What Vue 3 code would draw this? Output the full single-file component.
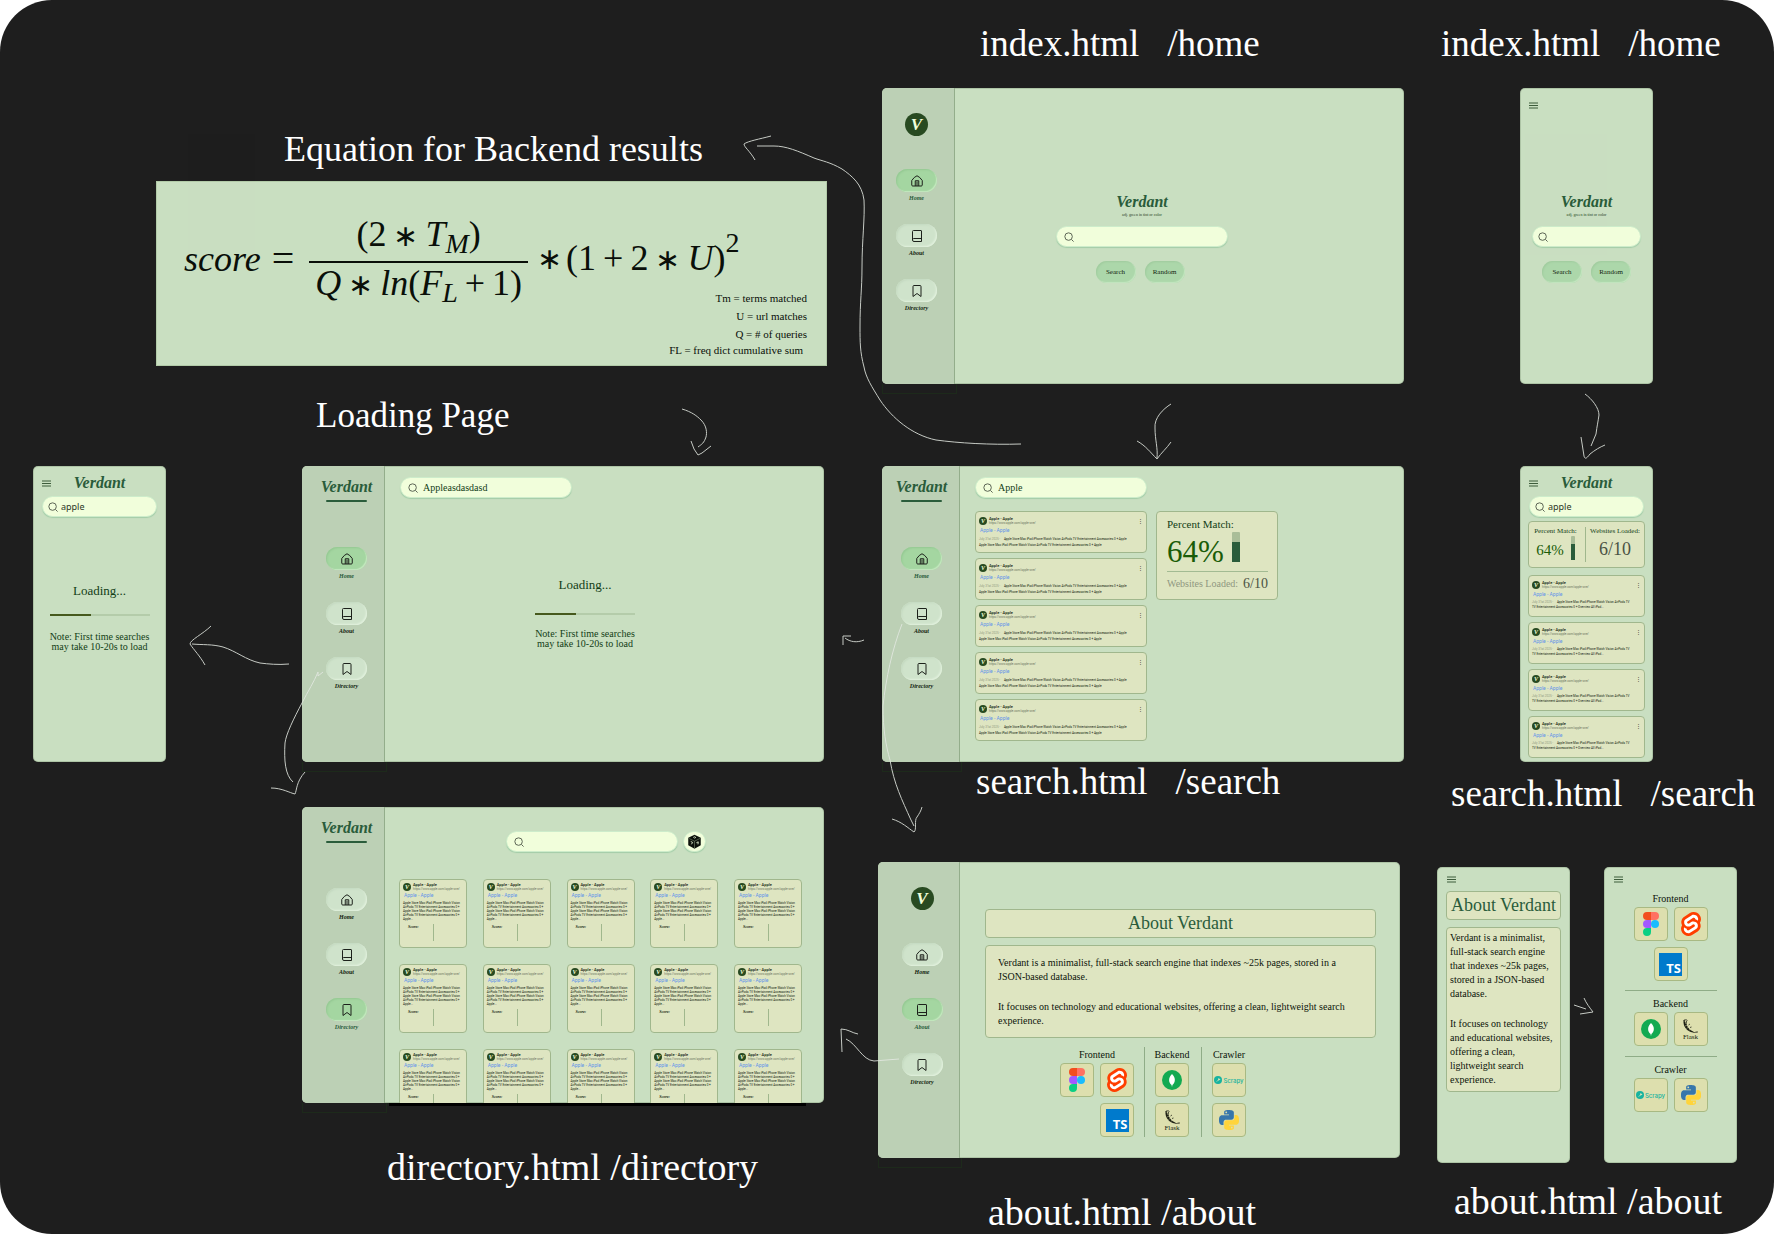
<script setup>
import { ref } from 'vue'

const navItems = [
  { id: 'home', label: 'Home', icon: '#i-home' },
  { id: 'about', label: 'About', icon: '#i-book' },
  { id: 'directory', label: 'Directory', icon: '#i-bookmark' },
]

const desktops = [
  { id: 'home', active: 'home', badge: true },
  { id: 'loading', active: 'home', badge: false },
  { id: 'search', active: 'home', badge: false },
  { id: 'directory', active: 'directory', badge: false },
  { id: 'about', active: 'about', badge: true },
]

const mobiles = ['m-home', 'm-loading', 'm-search', 'm-about', 'm-stack']

const titles = [
  { id: 't-home', parts: ['index.html', '/home'] },
  { id: 't-mhome', parts: ['index.html', '/home'] },
  { id: 't-equation', parts: ['Equation for Backend results'] },
  { id: 't-loading', parts: ['Loading Page'] },
  { id: 't-search', parts: ['search.html', '/search'] },
  { id: 't-msearch', parts: ['search.html', '/search'] },
  { id: 't-directory', parts: ['directory.html /directory'] },
  { id: 't-about', parts: ['about.html /about'] },
  { id: 't-mabout', parts: ['about.html /about'] },
]

const legend = ['Tm = terms matched', 'U = url matches', 'Q = # of queries']

const arrows = [
  'M1021 444C990 445 958 443 936 440C912 435 892 418 880 400C872 387 866 378 864 367C860 352 860 342 860 327C860 300 862 290 862 267C862 240 865 218 864 200C862 184 852 176 842 169C830 162 822 161 814 158C798 151 786 146 774 146L757 146M771 136C760 139 748 141 744 144C744 147 750 151 755 160',
  'M682 409C692 412 697 416 701 420C707 426 707 433 706 437C704 443 702 444 698 447M691 441L694 449L698 455L702 453L711 446',
  'M1171 404C1163 409 1154 418 1155 428C1155 440 1158 448 1157 458M1137 441C1146 446 1150 452 1157 459C1161 453 1167 448 1171 442',
  'M1585 394C1592 399 1599 408 1599 415C1598 422 1597 426 1596 434L1591 446M1581 437L1584 456C1585 460 1587 458 1590 454C1595 450 1600 447 1605 445',
  'M289 664C278 665 268 664 260 663C246 660 236 651 223 647C212 644 203 645 192 644M211 626C203 634 190 640 190 644C194 650 200 656 205 665',
  'M323 672L318 676L318 672C314 682 308 691 302 703C294 718 286 734 285 743C284 760 285 775 293 782M271 788C282 788 290 793 295 794C297 790 296 782 305 772',
  'M864 640C857 643 850 642 845 638M851 636L843 636L843 645',
  'M902 624C892 650 886 678 883 706C883 730 886 746 890 760C894 784 902 800 911 820L914 826M892 819C902 822 908 828 914 832C917 830 914 820 917 817C919 814 921 811 922 807',
  'M899 1059L874 1061C862 1060 857 1044 846 1039M858 1034C852 1033 848 1029 841 1029L842 1052',
  'M1574 1005L1586 1009M1584 998C1586 1003 1590 1008 1593 1012L1580 1014',
]

const blurb = [
  'Verdant is a minimalist, full-stack search engine that indexes ~25k pages, stored in a JSON-based database.',
  'It focuses on technology and educational websites, offering a clean, lightweight search experience.',
]

const stack = [
  { name: 'Frontend', tools: ['figma', 'svelte', 'ts'] },
  { name: 'Backend', tools: ['mongo', 'flask'] },
  { name: 'Crawler', tools: ['scrapy', 'python'] },
]

const snippet = 'Apple Store Mac iPad iPhone Watch Vision AirPods TV Entertainment Accessories 0 + Apple'
const snippetShort = 'Apple Store Mac iPad iPhone Watch Vision AirPods TV'
const snippetTail = 'TV Entertainment Accessories 0 + Overview All iPad...'
const siteUrl = 'https://www.apple.com/apple-one/'

const queries = ref({
  home: '', loading: 'Appleasdasdasd', search: 'Apple', directory: '',
  'm-home': '', 'm-loading': 'apple', 'm-search': 'apple',
})
</script>

<template>
  <div class="board">
    <svg class="sprite" aria-hidden="true">
      <symbol id="i-home" viewBox="0 0 24 24"><path d="M1.500 11 6.500 5 12 1.500 17.500 5l5 6V20a2 2 0 0 1-2 2h-17a2 2 0 0 1-2-2zM8.500 22V11.500h7V22M12 13v9" fill="none" stroke="currentColor" stroke-width="2" /></symbol>
      <symbol id="i-book" viewBox="0 0 24 24"><path d="M3 20V3a2 2 0 0 1 2-2h15a1 1 0 0 1 1 1v21H6a3 3 0 0 1-3-3c0-2 1-3 3-3h15" fill="none" stroke="currentColor" stroke-width="2" stroke-linejoin="round" /></symbol>
      <symbol id="i-bookmark" viewBox="0 0 24 24"><path d="M4 23V3a2 2 0 0 1 2-2h12a2 2 0 0 1 2 2v20l-8-6z" fill="none" stroke="currentColor" stroke-width="2" stroke-linejoin="round" /></symbol>
      <symbol id="i-search" viewBox="0 0 24 24"><circle cx="11" cy="11" r="9" fill="none" stroke="currentColor" stroke-width="2.400" /><path d="m18 18 5 5" stroke="currentColor" stroke-width="2.400" /></symbol>
      <symbol id="i-menu" viewBox="0 0 9 7"><path d="M0 1h9M0 3.500h9M0 6h9" stroke="currentColor" stroke-width="1" /></symbol>
      <symbol id="i-dice" viewBox="0 0 24 24">
        <path d="M12 1 22 6v12l-10 5.500L2 18V6z" fill="#0b110b" />
        <path d="m3 7 9 4.500L21 7M12 11.500V23" fill="none" stroke="#8fa085" stroke-width=".8" />
        <path d="M10 5.500q2-2 4 0l-2 1.500M6 12l3 1.500-2 3M15 14l3-1.500-.5 4" fill="none" stroke="#dbe8c9" stroke-width="1.500" />
      </symbol>
      <symbol id="l-figma" viewBox="0 0 38 57">
        <path d="M19 28.500a9.500 9.500 0 1 1 19 0 9.500 9.500 0 0 1-19 0z" fill="#1abcfe" />
        <path d="M0 47.500A9.500 9.500 0 0 1 9.500 38H19v9.500a9.500 9.500 0 1 1-19 0z" fill="#0acf83" />
        <path d="M19 0v19h9.500a9.500 9.500 0 1 0 0-19z" fill="#ff7262" />
        <path d="M0 9.500A9.500 9.500 0 0 0 9.500 19H19V0H9.500A9.500 9.500 0 0 0 0 9.500z" fill="#f24e1e" />
        <path d="M0 28.500A9.500 9.500 0 0 0 9.500 38H19V19H9.500A9.500 9.500 0 0 0 0 28.500z" fill="#a259ff" />
      </symbol>
      <symbol id="l-svelte" viewBox="0 0 98 118">
        <path fill="#ff3e00" d="M91.8 15.6C80.9-.1 59.2-4.7 43.6 5.2L16.1 22.8C8.6 27.5 3.4 35.2 1.9 43.9c-1.3 7.3-.2 14.8 3.3 21.3-2.4 3.6-4 7.6-4.7 11.8-1.6 8.9.5 18.1 5.7 25.4 11 15.7 32.6 20.3 48.2 10.4l27.5-17.5c7.5-4.7 12.7-12.4 14.2-21.1 1.3-7.3.2-14.8-3.3-21.3 2.4-3.6 4-7.6 4.7-11.8 1.7-9-.4-18.2-5.7-25.5" />
        <path fill="#fff" d="M40.9 103.900c-8.900 2.300-18.200-1.200-23.400-8.700-3.200-4.400-4.400-9.900-3.500-15.300.2-.9.4-1.700.6-2.600l.5-1.600 1.400 1c3.300 2.400 6.900 4.200 10.800 5.400l1 .3-.1 1c-.1 1.400.3 2.900 1.100 4.100 1.600 2.300 4.400 3.400 7.100 2.700.6-.2 1.200-.4 1.700-.7L65.500 72c1.400-.9 2.300-2.200 2.600-3.800.3-1.600-.1-3.300-1-4.600-1.600-2.300-4.400-3.300-7.100-2.600-.6.2-1.200.4-1.700.7l-10.500 6.700c-1.700 1.100-3.600 1.900-5.600 2.400-8.900 2.300-18.200-1.200-23.400-8.700-3.100-4.400-4.400-9.900-3.400-15.300.9-5.200 4.100-9.900 8.600-12.700l27.500-17.500c1.700-1.100 3.600-1.900 5.600-2.500 8.900-2.300 18.200 1.200 23.400 8.700 3.200 4.400 4.400 9.900 3.500 15.300-.2.9-.4 1.700-.7 2.600l-.5 1.600-1.400-1c-3.300-2.400-6.900-4.200-10.800-5.400l-1-.3.1-1c.1-1.400-.3-2.900-1.100-4.100-1.600-2.300-4.400-3.300-7.100-2.600-.6.2-1.200.4-1.700.7L32.400 46.100c-1.400.9-2.300 2.200-2.600 3.800s.1 3.300 1 4.600c1.600 2.300 4.400 3.300 7.100 2.600.6-.2 1.200-.4 1.700-.7l10.500-6.700c1.700-1.100 3.600-1.900 5.600-2.500 8.900-2.300 18.200 1.200 23.400 8.700 3.200 4.400 4.400 9.900 3.500 15.300-.9 5.200-4.100 9.900-8.600 12.700l-27.500 17.500c-1.700 1.100-3.600 1.900-5.600 2.500" />
      </symbol>
      <symbol id="l-mongo" viewBox="0 0 20 20"><circle cx="10" cy="10" r="10" fill="#13aa52" /><path d="M10 4c4 4 3.500 8.500.4 11l-.2 1.500h-.4L9.600 15C6.500 12.500 6 8 10 4z" fill="#fff" /></symbol>
      <symbol id="l-flask" viewBox="0 0 32 30"><path d="M2 3c-1 12 6 25 29 25-12-2-19-8-22-15C8 9 8 6 9 3 7 4 6 6 6 8 4 6 4 4 6 2z" fill="#1c1f14" /><path d="M5 8l3 1M5 14l5-2M8 19l4-3M13 23l3-4" fill="none" stroke="#dddfae" stroke-width="1" /><path d="M2 3c3-2 6-2 8 0M12 12l3-2M15 17l3-1M26 26h5" fill="none" stroke="#1c1f14" stroke-width="1.500" /></symbol>
      <symbol id="l-scrapy" viewBox="0 0 16 16"><circle cx="8" cy="8" r="8" fill="#17b3a0" /><path d="m3 13 5-5 1-4 4 3-4 2z" fill="#dfe6b4" /></symbol>
      <symbol id="l-python" viewBox="0 0 24 24">
        <path fill="#3776ab" d="M14.250.18l.9.2.73.26.59.3.45.32.34.34.25.34.16.33.1.3.04.26.02.2-.01.13V8.500l-.05.63-.13.55-.21.46-.26.38-.3.31-.33.25-.35.19-.35.14-.33.1-.3.07-.26.04-.21.02H8.770l-.69.05-.59.14-.5.22-.41.27-.33.32-.27.35-.2.36-.15.37-.1.35-.07.32-.04.27-.02.21v3.060H3.170l-.21-.03-.28-.07-.32-.12-.35-.18-.36-.26-.36-.36-.35-.46-.32-.59-.28-.73-.21-.88-.14-1.050-.05-1.230.06-1.220.16-1.040.24-.87.32-.71.36-.57.4-.44.42-.33.42-.24.4-.16.36-.1.32-.05.24-.01h.16l.06.01h8.160v-.83H6.180l-.01-2.750-.02-.37.05-.34.11-.31.17-.28.25-.26.31-.23.38-.2.44-.18.51-.15.58-.12.64-.1.71-.06.77-.04.84-.02 1.270.05zm-6.300 1.980l-.23.33-.08.41.08.41.23.34.33.22.41.09.41-.09.33-.22.23-.34.08-.41-.08-.41-.23-.33-.33-.22-.41-.09-.41.09z" />
        <path fill="#ffd43b" d="M21.100 6.110l.28.06.32.12.35.18.36.27.36.35.35.47.32.59.28.73.21.88.14 1.040.05 1.230-.06 1.230-.16 1.040-.24.86-.32.71-.36.57-.4.45-.42.33-.42.24-.4.16-.36.09-.32.05-.24.02-.16-.01h-8.220v.82h5.840l.01 2.760.02.36-.05.34-.11.31-.17.29-.25.25-.31.24-.38.2-.44.17-.51.15-.58.13-.64.09-.71.07-.77.04-.84.01-1.270-.04-1.070-.14-.9-.2-.73-.25-.59-.3-.45-.33-.34-.34-.25-.34-.16-.33-.1-.3-.04-.25-.02-.2.01-.13v-5.340l.05-.64.13-.54.21-.46.26-.38.3-.32.33-.24.35-.2.35-.14.33-.1.3-.06.26-.04.21-.02.13-.01h5.840l.69-.05.59-.14.5-.21.41-.28.33-.32.27-.35.2-.36.15-.36.1-.35.07-.32.04-.28.02-.21V6.070h2.090l.14.01zm-6.470 14.250l-.23.33-.08.41.08.41.23.33.33.23.41.08.41-.08.33-.23.23-.33.08-.41-.08-.41-.23-.33-.33-.23-.41-.08-.41.08z" />
      </symbol>
    </svg>

    <h2 v-for="t in titles" :key="t.id" class="title" :class="t.id">
      <span v-for="p in t.parts" :key="p">{{ p }}</span>
    </h2>

    <!-- Scoring formula -->
    <section class="node equation">
      <div class="formula">
        <i>score</i><span class="op equals">=</span>
        <span class="fraction">
          <span class="term numerator">(2<span class="op ast">∗</span><i>T</i><sub><i>M</i></sub>)</span>
          <span class="term denominator"><i>Q</i><span class="op ast">∗</span><i>ln</i>(<i>F</i><sub><i>L</i></sub><span class="op">+</span>1)</span>
        </span>
        <span class="op ast outer">∗</span>
        <span class="term">(1<span class="op">+</span>2<span class="op ast">∗</span><i>U</i>)<sup>2</sup></span>
      </div>
      <ul class="legend">
        <li v-for="l in legend" :key="l">{{ l }}</li>
        <li class="legend-last">FL = freq dict cumulative sum</li>
      </ul>
    </section>

    <!-- Desktop screens -->
    <section v-for="d in desktops" :key="d.id" class="node desktop" :class="'d-' + d.id">
      <div class="screen row">
        <aside class="sidebar">
          <div class="side-head">
            <span v-if="d.badge" class="badge">V</span>
            <span v-else class="logo underlined">Verdant</span>
          </div>
          <nav>
            <a v-for="n in navItems" :key="n.id" href="#" class="nav-item" :class="{ active: n.id === d.active }">
              <span class="pill"><svg class="nav-icon"><use :href="n.icon" /></svg></span>
              <span class="nav-label">{{ n.label }}</span>
            </a>
          </nav>
        </aside>

        <main v-if="d.id === 'home'" class="main hero">
          <span class="logo">Verdant</span>
          <small class="tagline">adj. green in tint or color</small>
          <label class="search"><svg class="glass"><use href="#i-search" /></svg><input v-model="queries.home" aria-label="Search"></label>
          <div class="actions"><button type="button">Search</button><button type="button">Random</button></div>
        </main>

        <main v-else-if="d.id === 'loading'" class="main">
          <label class="search"><svg class="glass"><use href="#i-search" /></svg><input v-model="queries.loading" aria-label="Search"></label>
          <div class="loader">
            <p class="loading-text">Loading...</p>
            <div class="progress"><span /></div>
            <p class="note">Note: First time searches<br>may take 10-20s to load</p>
          </div>
        </main>

        <main v-else-if="d.id === 'search'" class="main">
          <label class="search"><svg class="glass"><use href="#i-search" /></svg><input v-model="queries.search" aria-label="Search"></label>
          <div class="results-row">
            <div class="results">
              <article v-for="i in 5" :key="i" class="card result">
                <header><span class="mini-badge">V</span><span class="site"><b>Apple - Apple</b><small>{{ siteUrl }}</small></span><span class="dots">⋮</span></header>
                <a href="#">Apple - Apple</a>
                <p><time>July 31st 2025 -</time> {{ snippet }}</p>
                <p>{{ snippet }}</p>
              </article>
            </div>
            <div class="card match">
              <h3>Percent Match:</h3>
              <div class="match-value"><strong>64%</strong><span class="gauge"><span /></span></div>
              <div class="match-foot"><span>Websites Loaded:</span><b>6/10</b></div>
            </div>
          </div>
        </main>

        <main v-else-if="d.id === 'directory'" class="main">
          <div class="dir-bar">
            <label class="search"><svg class="glass"><use href="#i-search" /></svg><input v-model="queries.directory" aria-label="Search"></label>
            <button type="button" class="dice" aria-label="Random"><svg><use href="#i-dice" /></svg></button>
          </div>
          <div class="dir-grid">
            <article v-for="i in 15" :key="i" class="card entry">
              <header><span class="mini-badge">V</span><span class="site"><b>Apple - Apple</b><small>{{ siteUrl }}</small></span></header>
              <a href="#">Apple - Apple</a>
              <p>Apple Store Mac iPad iPhone Watch Vision<br>AirPods TV Entertainment Accessories 0 +<br>Apple Store Mac iPad iPhone Watch Vision<br>AirPods TV Entertainment Accessories 0 +<br>Apple...</p>
              <div class="score"><b>Score:</b></div>
            </article>
          </div>
        </main>

        <main v-else class="main">
          <h3 class="card about-title">About Verdant</h3>
          <div class="card about-text"><p v-for="b in blurb" :key="b">{{ b }}</p></div>
          <div class="stack">
            <div v-for="g in stack" :key="g.name" class="group" :class="g.name">
              <h4>{{ g.name }}</h4>
              <div class="tiles">
                <span v-for="t in g.tools" :key="t" class="tile" :class="t">
                  <b v-if="t === 'ts'" class="ts-mark">TS</b>
                  <template v-else><svg><use :href="'#l-' + t" /></svg><span v-if="t === 'flask'">Flask</span><span v-if="t === 'scrapy'">Scrapy</span></template>
                </span>
              </div>
            </div>
          </div>
        </main>
      </div>
    </section>

    <!-- Phone screens -->
    <section v-for="m in mobiles" :key="m" class="node phone" :class="m">
      <div class="screen">
        <header class="phone-head">
          <button type="button" class="menu" aria-label="Menu"><svg><use href="#i-menu" /></svg></button>
          <span v-if="m === 'm-loading' || m === 'm-search'" class="logo">Verdant</span>
        </header>

        <div v-if="m === 'm-home'" class="hero">
          <span class="logo">Verdant</span>
          <small class="tagline">adj. green in tint or color</small>
          <label class="search"><svg class="glass"><use href="#i-search" /></svg><input v-model="queries['m-home']" aria-label="Search"></label>
          <div class="actions"><button type="button">Search</button><button type="button">Random</button></div>
        </div>

        <template v-else-if="m === 'm-loading'">
          <label class="search sans"><svg class="glass"><use href="#i-search" /></svg><input v-model="queries['m-loading']" aria-label="Search"></label>
          <div class="loader">
            <p class="loading-text">Loading...</p>
            <div class="progress"><span /></div>
            <p class="note">Note: First time searches<br>may take 10-20s to load</p>
          </div>
        </template>

        <template v-else-if="m === 'm-search'">
          <label class="search sans"><svg class="glass"><use href="#i-search" /></svg><input v-model="queries['m-search']" aria-label="Search"></label>
          <div class="card phone-stats">
            <div class="stat"><h4>Percent Match:</h4><div class="stat-value"><strong>64%</strong><span class="gauge"><span /></span></div></div>
            <div class="stat"><h4>Websites Loaded:</h4><b>6/10</b></div>
          </div>
          <div class="results">
            <article v-for="i in 4" :key="i" class="card result">
              <header><span class="mini-badge">V</span><span class="site"><b>Apple - Apple</b><small>{{ siteUrl }}</small></span><span class="dots">⋮</span></header>
              <a href="#">Apple - Apple</a>
              <p><time>July 31st 2025 -</time> {{ snippetShort }}</p>
              <p>{{ snippetTail }}</p>
            </article>
          </div>
        </template>

        <template v-else-if="m === 'm-about'">
          <h3 class="card about-title">About Verdant</h3>
          <div class="card about-text"><p v-for="b in blurb" :key="b">{{ b }}</p></div>
        </template>

        <div v-else class="stack">
          <div v-for="g in stack" :key="g.name" class="group" :class="g.name">
            <h4>{{ g.name }}</h4>
            <div class="tiles">
              <span v-for="t in g.tools" :key="t" class="tile" :class="t">
                <b v-if="t === 'ts'" class="ts-mark">TS</b>
                <template v-else><svg><use :href="'#l-' + t" /></svg><span v-if="t === 'flask'">Flask</span><span v-if="t === 'scrapy'">Scrapy</span></template>
              </span>
            </div>
          </div>
        </div>
      </div>
    </section>

    <svg class="arrows" aria-hidden="true"><path v-for="a in arrows" :key="a" :d="a" /></svg>
  </div>
</template>

<style>
body { margin: 0; background: #fff; }
</style>

<style scoped>
* { box-sizing: border-box; }
.board { position: relative; width: 100%; min-height: 100vh; overflow: hidden; background: #1e1e1e; border-radius: 52px; font-family: "Liberation Serif", serif; color: #12230f; }
.sprite { position: absolute; width: 0; height: 0; }
h2, h3, h4, p, ul { margin: 0; padding: 0; font-weight: 400; }
button { margin: 0; padding: 0; border: 0; background: none; font-family: inherit; color: inherit; }
a { text-decoration: none; color: inherit; }
svg { display: block; }

/* Canvas items */
.title { position: absolute; display: flex; gap: 28px; color: #fff; font-size: 37px; line-height: 40px; white-space: nowrap; }
.t-home { left: 980px; top: 24px; }
.t-mhome { left: 1441px; top: 24px; }
.t-equation { left: 284px; top: 129px; font-size: 36px; }
.t-loading { left: 316px; top: 396px; font-size: 35px; }
.t-search { left: 976px; top: 762px; }
.t-msearch { left: 1451px; top: 774px; }
.t-directory { left: 387px; top: 1147px; font-size: 38px; }
.t-about { left: 988px; top: 1192px; font-size: 38px; }
.t-mabout { left: 1454px; top: 1181px; font-size: 38px; }
.arrows { position: absolute; inset: 0; width: 100%; height: 100%; pointer-events: none; fill: none; stroke: #e4e9e2; stroke-width: 1; opacity: .85; }
.node { position: absolute; }
.desktop { width: 522px; --side: 83px; }
.phone { width: 133px; }
.d-home { left: 882px; top: 88px; --side: 73px; }
.d-loading { left: 302px; top: 466px; }
.d-search { left: 882px; top: 466px; --side: 78px; }
.d-directory { left: 302px; top: 807px; }
.d-about { left: 878px; top: 862px; --side: 82px; }
.m-home { left: 1520px; top: 88px; }
.m-loading { left: 33px; top: 466px; }
.m-search { left: 1520px; top: 466px; }
.m-about { left: 1437px; top: 867px; }
.m-stack { left: 1604px; top: 867px; }
.screen { height: 296px; overflow: hidden; border-radius: 5px; background: #c9dfc1; box-shadow: inset 0 0 0 1px rgba(90, 115, 85, .25); }
.row { display: flex; }
.desktop::before { content: ""; position: absolute; left: 0; top: 100%; width: var(--side); height: 9px; border: 1px solid #1d2a1b; border-top: 0; }
.d-directory::after { content: ""; position: absolute; left: 87px; right: 18px; top: 100%; height: 3px; background: #000; }

/* Formula */
.equation { left: 156px; top: 181px; width: 671px; height: 185px; background: #c9dfc1; border: 1px solid #b2cba8; }
.formula { display: flex; align-items: center; padding: 30px 0 0 27px; font-size: 36px; line-height: 44px; color: #0a0f09; white-space: nowrap; }
.op { margin: 0 7px; }
.ast { font-size: 30px; }
.equals { font-size: 40px; margin: 0 15px 0 11px; }
.outer { margin: 0 4px 0 9px; }
.fraction { display: flex; flex-direction: column; align-items: center; }
.term { display: block; }
.numerator { padding-bottom: 3px; }
.denominator { border-top: 2px solid #0a0f09; padding: 0 6px; line-height: 40px; }
sub, sup { font-size: 28px; line-height: 0; }
sub { vertical-align: -7px; }
sup { vertical-align: 18px; }
.legend { display: flex; flex-direction: column; align-items: flex-end; margin-top: -16px; padding-right: 19px; list-style: none; font-size: 11px; line-height: 18px; color: #0a0f09; }
.legend-last { line-height: 15px; margin-right: 4px; }

/* Sidebar */
.sidebar { width: var(--side); flex: none; display: flex; flex-direction: column; align-items: center; background: #bcd0b5; border-right: 1px solid #93ad8b; padding-left: 7px; }
.d-home .sidebar { padding-left: 0; padding-right: 3px; }
.d-search .sidebar { padding-left: 2px; }
.side-head { height: 81px; }
.badge { display: flex; align-items: center; justify-content: center; margin-top: 25px; width: 23px; height: 23px; border-radius: 50%; background: #284a21; color: #f1fedb; font-size: 17px; font-style: italic; font-weight: 700; }
.logo { display: block; color: #2a5c3b; font-size: 16px; line-height: 20px; font-style: italic; font-weight: 700; text-align: center; }
.underlined { margin-top: 11px; }
.underlined::after { content: ""; display: block; width: 41px; height: 2px; margin: 3px auto 0; background: #2a5c3b; border-radius: 1px; }
.nav-item { display: flex; flex-direction: column; align-items: center; height: 55px; }
.pill { display: flex; align-items: center; justify-content: center; width: 41px; height: 23px; border-radius: 12px; background: #cfe3cb; box-shadow: inset -1px -1px 2px #e3f2df, inset 1px 1px 2px #c3d8bf; }
.active .pill { background: #a4d6a1; box-shadow: inset -1px -1px 1px #c4e8bf, inset 1px 1px 2px #94c892; }
.nav-icon { width: 12px; height: 12px; color: #1c211b; }
.nav-label { font-size: 6px; line-height: 10px; font-style: italic; font-weight: 700; margin-top: 1px; }
.active .nav-label { color: #2a5c3b; }

/* Shared controls */
.main { flex: 1; min-width: 0; padding: 11px 0 0 15px; }
.search { display: flex; align-items: center; gap: 5px; flex: none; width: 172px; height: 21px; padding: 0 7px; border-radius: 11px; background: #f1fedb; border: 1px solid #cdeccb; box-shadow: 0 1px 1px #a3cda8; }
.glass { width: 10px; height: 10px; flex: none; color: #5d6656; }
input { flex: 1; min-width: 0; width: 0; height: 15px; padding: 0; border: 0; outline: 0; background: none; font: 10px "Liberation Serif", serif; color: #123d16; }
.phone .search { margin: 0 auto; width: 115px; padding: 0 5px; gap: 3px; }
.sans input { font: 9px "Noto Sans", sans-serif; color: #2c3827; }
.hero { display: flex; flex-direction: column; align-items: center; }
.main.hero { padding: 104px 75px 0 0; }
.hero .tagline { margin: 0; font-size: 4px; line-height: 5px; color: #1f3d22; }
.hero .search { margin-top: 9px; }
.phone .hero .search { width: 109px; }
.actions { display: flex; gap: 9px; margin-top: 14px; }
.main .actions { padding-right: 4px; }
.actions button { width: 40px; height: 22px; border-radius: 11px; background: #acd7aa; box-shadow: inset -1px -1px 1px #c4e6c0, inset 1px 1px 2px #a0cb9e; font-size: 7px; }
.loader { display: flex; flex-direction: column; align-items: center; padding: 79px 54px 0 0; text-align: center; color: #123d16; }
.loading-text { font-size: 13px; line-height: 16px; }
.progress { width: 100px; height: 2px; margin-top: 20px; background: #b4ccaa; }
.progress span { display: block; width: 41%; height: 100%; background: #46591d; }
.note { margin-top: 14px; font-size: 10px; line-height: 10px; }
.card { border: 1px solid #a0b78d; border-radius: 4px; background: #dee5c1; }

/* Search results */
.results-row { display: flex; align-items: flex-start; gap: 9px; margin-top: 13px; }
.results { display: flex; flex-direction: column; gap: 5px; }
.result { width: 172px; height: 42px; padding: 5px 3px 0; font-family: Roboto, sans-serif; white-space: nowrap; }
.result header, .entry header { display: flex; align-items: center; gap: 2px; height: 8px; }
.mini-badge { display: flex; align-items: center; justify-content: center; width: 8px; height: 8px; border-radius: 50%; background: #284a21; color: #f1fedb; font: italic 700 6px "Liberation Serif", serif; }
.site { display: flex; flex-direction: column; flex: 1; }
.site b { font-size: 4px; line-height: 4px; font-weight: 500; }
.site small { font-size: 3px; line-height: 4px; color: #6d7561; }
.dots { font-size: 5px; line-height: 6px; }
.result a, .entry a { display: block; margin-left: 1px; font-size: 5px; line-height: 9px; color: #5f93ea; }
.result a { padding-top: 1px; height: 11px; }
.result p { font-size: 3px; line-height: 6px; }
.result time { margin-right: 3px; color: #8f9780; }
.match { width: 122px; height: 89px; padding: 5px 9px 0 10px; }
.match h3 { font-size: 11px; line-height: 14px; color: #123d16; }
.match-value { display: flex; align-items: flex-end; gap: 8px; height: 31px; }
.match-value strong { font-size: 31px; line-height: 20px; font-weight: 400; color: #1a5c08; }
.gauge { display: flex; align-items: flex-end; width: 8px; height: 30px; background: #a9bd98; border-radius: 1px; }
.gauge span { width: 100%; height: 66%; background: #2a5c3b; }
.match-foot { display: flex; align-items: center; justify-content: space-between; height: 24px; margin-top: 9px; border-top: 1px solid #a3bb93; font-size: 10px; color: #8f9780; white-space: nowrap; }
.match-foot b { font-size: 14px; font-weight: 400; color: #4b5344; }

/* Directory */
.dir-bar { display: flex; gap: 5px; padding: 13px 0 0 107px; }
.dice { display: flex; align-items: center; justify-content: center; width: 23px; height: 21px; border-radius: 11px; background: #f1fedb; border: 1px solid #cdeccb; box-shadow: 0 1px 1px #a3cda8; }
.dice svg { width: 15px; height: 15px; }
.dir-grid { display: grid; grid-template-columns: repeat(5, 68px); justify-content: space-between; row-gap: 16px; padding: 27px 22px 0 0; }
.d-directory .main { padding-left: 14px; }
.entry { height: 69px; padding: 3px 3px 0; font-family: Roboto, sans-serif; white-space: nowrap; }
.entry p { font-size: 3px; line-height: 4px; margin-top: 1px; }
.score { display: flex; height: 17px; margin-top: 3px; width: 31px; padding-left: 5px; border-right: 1px solid #a0b78d; font: italic 4px/6px "Liberation Serif", serif; }

/* About */
.about-title { color: #2a5c3b; text-align: center; font-size: 18px; line-height: 27px; white-space: nowrap; }
.d-about .main { padding: 47px 24px 0 25px; }
.about-text { display: flex; flex-direction: column; gap: 16px; margin-top: 7px; font-size: 10px; line-height: 14px; color: #0c140a; }
.d-about .about-text { height: 93px; padding: 10px 20px 0 12px; }
.stack h4 { text-align: center; font-size: 10px; line-height: 16px; color: #0c140a; }
.d-about .stack { display: flex; justify-content: flex-start; padding: 9px 0 0 65px; }
.group { padding: 0 10px; }
.group + .group { border-left: 1px solid #8fac87; }
.d-about .Backend { padding-right: 12px; }
.tiles { display: flex; flex-wrap: wrap; justify-content: flex-end; gap: 6px; width: 34px; }
.Frontend .tiles { width: 74px; }
.d-about .group h4 { margin: 0 -4px; }
.tile { display: flex; flex-direction: column; align-items: center; justify-content: center; width: 34px; height: 34px; border: 1px solid #a8b983; border-radius: 4px; background: #dddfae; font-size: 7px; line-height: 7px; }
.figma svg { width: 16px; height: 24px; }
.svelte svg { width: 20px; height: 24px; }
.mongo svg, .python svg { width: 20px; height: 20px; }
.flask svg { width: 17px; height: 15px; }
.flask { padding-top: 2px; }
.tile.scrapy { flex-direction: row; gap: 1px; font: 500 6px Inter, sans-serif; color: #17b3a0; }
.scrapy svg { width: 8px; height: 8px; flex: none; }
.ts-mark { display: block; width: 23px; height: 23px; padding-right: 1px; background: #007acc; color: #fff; font: 700 13px/31px "Noto Sans", sans-serif; text-align: right; }

/* Phones */
.phone-head { display: flex; align-items: center; height: 24px; padding-left: 9px; }
.menu { width: 9px; height: 7px; flex: none; color: #3d5c3b; }
.menu svg { width: 9px; height: 7px; }
.m-home .phone-head { height: 34px; }
.m-home .hero { padding-top: 70px; }
.m-loading .phone-head, .m-search .phone-head { height: 30px; padding-top: 4px; }
.phone-head .logo { flex: 1; padding-right: 18px; }
.m-loading .loader { padding: 66px 0 0; }
.m-loading .progress { margin-top: 15px; }
.m-loading .note { margin-top: 16px; }
.phone-stats { display: flex; width: 117px; height: 47px; margin: 4px auto 0; padding: 5px 0; }
.stat { width: 56px; flex: none; text-align: center; padding-right: 3px; }
.stat + .stat { flex: 1; padding: 0; border-left: 1px solid #a0b78d; }
.stat h4 { font-size: 7px; line-height: 8px; color: #123d16; white-space: nowrap; }
.stat-value { display: flex; align-items: flex-end; justify-content: center; gap: 7px; padding-top: 1px; }
.stat strong { font-size: 15px; line-height: 20px; font-weight: 400; color: #1a5c08; }
.stat b { font-size: 18px; line-height: 29px; font-weight: 400; color: #4b5344; }
.stat .gauge { width: 4px; height: 24px; }
.phone .results { align-items: center; margin-top: 7px; }
.phone .result { width: 117px; }
.phone .result p { line-height: 5px; }
.m-about .screen, .m-stack .screen { padding: 0 9px; }
.m-about .phone-head { padding-left: 1px; }
.m-stack .phone-head { padding-left: 1px; }
.m-about .about-text { padding: 3px 3px 4px; }
.m-stack .stack { display: flex; flex-direction: column; align-items: center; }
.m-stack .group { width: 92px; padding: 0 0 9px; display: flex; flex-direction: column; align-items: center; }
.m-stack .group + .group { border-left: 0; border-top: 1px solid #8fac87; padding-top: 5px; }
.m-stack .Backend { padding-bottom: 10px; }
.m-stack .group .tiles { width: 74px; justify-content: center; }
</style>
